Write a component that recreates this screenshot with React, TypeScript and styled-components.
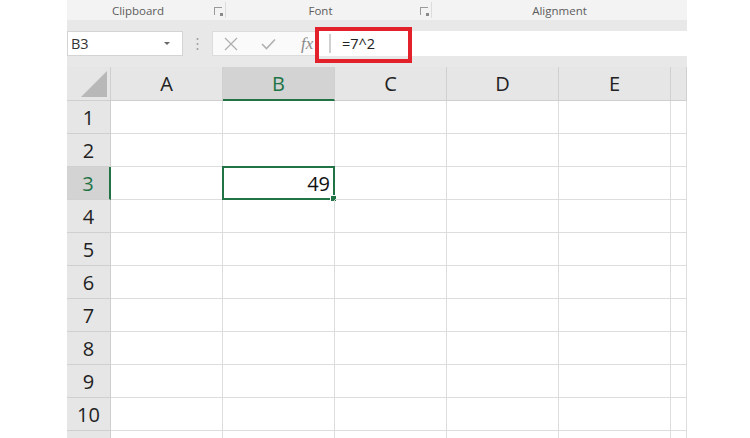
import React from "react";
import styled, { createGlobalStyle, css } from "styled-components";

const GlobalStyle = createGlobalStyle`
    html, body {
        margin: 0;
        padding: 0;
        background: #ffffff;
        font-family: "Open Sans", "Noto Sans", Arial, sans-serif;
    }
`;

const GREEN = "#217346";
const COLS = ["A", "B", "C", "D", "E", ""];
const ROWS = [1, 2, 3, 4, 5, 6, 7, 8, 9, 10, 11];

const Sheet = styled.div`
    width: 620px;
    margin-left: 67px;
    height: 438px;
    overflow: hidden;
`;

const RibbonLabels = styled.div`
    display: grid;
    grid-template-columns: 159px 206px 1fr;
    height: 20px;
    background: #f3f3f3;
`;

const Group = styled.div<{ $last?: boolean }>`
    position: relative;
    display: flex;
    align-items: center;
    justify-content: center;
    font-size: 11.5px;
    color: #5c5c5c;
    padding-right: ${(p) => (p.$last ? "0" : "16px")};
    border-right: ${(p) => (p.$last ? "none" : "1px solid #dcdcdc")};
    margin: 2px 0;
`;

const Launcher = styled.span`
    position: absolute;
    right: 3px;
    top: 5px;
    width: 7px;
    height: 7px;
    border-left: 1px solid #9a9a9a;
    border-top: 1px solid #9a9a9a;
    &::after {
        content: "";
        position: absolute;
        right: -1px;
        bottom: -1px;
        width: 3px;
        height: 3px;
        background: #8a8a8a;
    }
`;

const FormulaBar = styled.div`
    display: flex;
    align-items: center;
    height: 47px;
    background: #e8e8e8;
    position: relative;
`;

const NameBox = styled.div`
    display: flex;
    align-items: center;
    justify-content: space-between;
    width: 116px;
    height: 25px;
    box-sizing: border-box;
    background: #ffffff;
    border: 1px solid #d4d4d4;
    padding: 0 12px 0 3px;
    font-size: 14.5px;
    color: #333;
`;

const Caret = styled.span`
    width: 0;
    height: 0;
    border-left: 3px solid transparent;
    border-right: 3px solid transparent;
    border-top: 3px solid #666;
`;

const Grip = styled.div`
    width: 29px;
    display: flex;
    justify-content: center;
    svg { display: block; }
`;

const IconBox = styled.div`
    display: flex;
    align-items: center;
    height: 25px;
    width: 106px;
    box-sizing: border-box;
    background: #fafafa;
    border: 1px solid #dcdcdc;
    border-right: none;
    padding-left: 11px;
`;

const IconSlot = styled.div`
    width: 37px;
    display: flex;
    align-items: center;
    svg { display: block; }
`;

const Fx = styled.span`
    font-family: "Liberation Serif", "DejaVu Serif", serif;
    font-style: italic;
    font-size: 17px;
    color: #8a8a8a;
    margin-left: 3px;
`;

const Input = styled.div`
    flex: 1;
    display: flex;
    align-items: center;
    height: 25px;
    background: #ffffff;
    font-size: 14.5px;
    color: #222;
    padding-left: 12px;
    position: relative;
    &::before {
        content: "";
        position: absolute;
        left: 11px;
        top: 3px;
        bottom: 3px;
        width: 2px;
        background: #d0d0d0;
    }
`;

const FormulaText = styled.span`
    margin-left: 12px;
`;

const Highlight = styled.div`
    position: absolute;
    left: 248px;
    top: 7px;
    width: 97px;
    height: 36px;
    box-sizing: border-box;
    border: 4px solid #e3212b;
`;

const Grid = styled.div`
    display: grid;
    grid-template-columns: 44px repeat(5, 112px) 16px;
    grid-template-rows: 34px;
    grid-auto-rows: 33px;
`;

const Corner = styled.div`
    background: #e6e6e6;
    border-right: 1px solid #cfcfcf;
    border-bottom: 1px solid #cfcfcf;
    display: flex;
    align-items: flex-end;
    justify-content: flex-end;
    padding: 0 3px 3px 0;
    box-sizing: border-box;
`;

const ColHead = styled.div<{ $active?: boolean }>`
    display: flex;
    align-items: center;
    justify-content: center;
    box-sizing: border-box;
    font-size: 20px;
    border-right: 1px solid #d0d0d0;
    ${(p) =>
        p.$active
            ? css`
                  background: #d3d3d3;
                  color: ${GREEN};
                  border-bottom: 2px solid ${GREEN};
              `
            : css`
                  background: #e6e6e6;
                  color: #222;
                  border-bottom: 1px solid #cfcfcf;
              `}
`;

const RowHead = styled.div<{ $active?: boolean }>`
    display: flex;
    align-items: center;
    justify-content: center;
    box-sizing: border-box;
    font-size: 20px;
    border-bottom: 1px solid #d0d0d0;
    ${(p) =>
        p.$active
            ? css`
                  background: #d3d3d3;
                  color: ${GREEN};
                  border-right: 2px solid ${GREEN};
              `
            : css`
                  background: #e6e6e6;
                  color: #222;
                  border-right: 1px solid #cfcfcf;
              `}
`;

const Cell = styled.div<{ $selected?: boolean }>`
    position: relative;
    box-sizing: border-box;
    display: flex;
    align-items: center;
    justify-content: flex-end;
    padding-right: 3px;
    font-size: 20px;
    color: #111;
    border-right: 1px solid #dddddd;
    border-bottom: 1px solid #dddddd;
    ${(p) =>
        p.$selected &&
        css`
            border: 2px solid ${GREEN};
            margin: -1px 0 0 -1px;
        `}
`;

const FillHandle = styled.span`
    position: absolute;
    right: -4px;
    bottom: -4px;
    width: 5px;
    height: 5px;
    background: ${GREEN};
    border: 1px solid #fff;
`;

const cellValue = (col: string, row: number) => (col === "B" && row === 3 ? "49" : "");

const App: React.FC = () => {
    return (
        <>
            <GlobalStyle />
            <Sheet>
                <RibbonLabels>
                    <Group>
                        Clipboard
                        <Launcher />
                    </Group>
                    <Group>
                        Font
                        <Launcher />
                    </Group>
                    <Group $last>Alignment</Group>
                </RibbonLabels>
                <FormulaBar>
                    <NameBox>
                        B3
                        <Caret />
                    </NameBox>
                    <Grip>
                        <svg width="3" height="14" viewBox="0 0 3 14">
                            <circle cx="1.5" cy="2" r="1" fill="#9d9d9d" />
                            <circle cx="1.5" cy="7" r="1" fill="#9d9d9d" />
                            <circle cx="1.5" cy="12" r="1" fill="#9d9d9d" />
                        </svg>
                    </Grip>
                    <IconBox>
                        <IconSlot>
                            <svg width="14" height="14" viewBox="0 0 14 14">
                                <path d="M1 1 L13 13 M13 1 L1 13" stroke="#b0b0b0" strokeWidth="1.3" fill="none" />
                            </svg>
                        </IconSlot>
                        <IconSlot>
                            <svg width="15" height="12" viewBox="0 0 15 12">
                                <path d="M1 6 L5.5 10.5 L14 1.5" stroke="#b0b0b0" strokeWidth="1.6" fill="none" />
                            </svg>
                        </IconSlot>
                        <Fx>fx</Fx>
                    </IconBox>
                    <Input>
                        <FormulaText>=7^2</FormulaText>
                    </Input>
                    <Highlight />
                </FormulaBar>
                <Grid>
                    <Corner>
                        <svg width="26" height="26" viewBox="0 0 26 26">
                            <polygon points="26,0 26,26 0,26" fill="#b8b8b8" />
                        </svg>
                    </Corner>
                    {COLS.map((c, i) => (
                        <ColHead key={i} $active={c === "B"}>
                            {c}
                        </ColHead>
                    ))}
                    {ROWS.map((r) => (
                        <React.Fragment key={r}>
                            {/* the last row is cut by the window, its number falls below the edge */}
                            <RowHead $active={r === 3}>{r < 11 ? r : ""}</RowHead>
                            {COLS.map((c, i) => {
                                const selected = c === "B" && r === 3;
                                return (
                                    <Cell key={i} $selected={selected}>
                                        {cellValue(c, r)}
                                        {selected && <FillHandle />}
                                    </Cell>
                                );
                            })}
                        </React.Fragment>
                    ))}
                </Grid>
            </Sheet>
        </>
    );
};

export default App;
